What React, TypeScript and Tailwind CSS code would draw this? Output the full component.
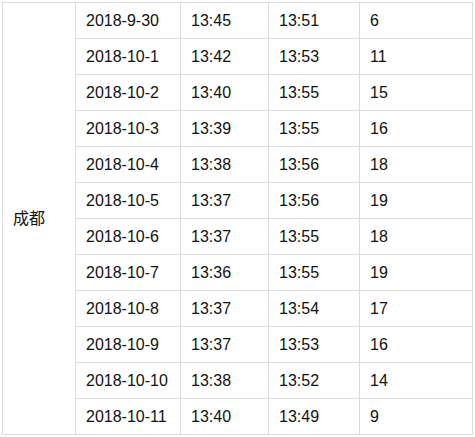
import React from "react";

const rows: [string, string, string, string][] = [
  ["2018-9-30", "13:45", "13:51", "6"],
  ["2018-10-1", "13:42", "13:53", "11"],
  ["2018-10-2", "13:40", "13:55", "15"],
  ["2018-10-3", "13:39", "13:55", "16"],
  ["2018-10-4", "13:38", "13:56", "18"],
  ["2018-10-5", "13:37", "13:56", "19"],
  ["2018-10-6", "13:37", "13:55", "18"],
  ["2018-10-7", "13:36", "13:55", "19"],
  ["2018-10-8", "13:37", "13:54", "17"],
  ["2018-10-9", "13:37", "13:53", "16"],
  ["2018-10-10", "13:38", "13:52", "14"],
  ["2018-10-11", "13:40", "13:49", "9"],
];

export default function App() {
  return (
    <div className="w-[475px] h-[437px] bg-white overflow-hidden">
      <div
        className="ml-[2px] mt-[2px] grid grid-cols-[73px_105px_88px_91px_113px] grid-rows-[repeat(12,36px)] border-l border-t border-[#dddddd] text-[16px] text-[#111111] w-max"
        style={{ fontFamily: '"Liberation Sans", Arial, "Noto Sans CJK SC", sans-serif' }}
      >
        <div className="row-span-12 flex items-center pl-[10px] border-r border-b border-[#dddddd]">
          成都
        </div>
        {rows.map((r, i) => (
          <React.Fragment key={i}>
            {r.map((c, j) => (
              <div
                key={j}
                className="flex items-center pl-[10px] border-r border-b border-[#dddddd]"
              >
                {c}
              </div>
            ))}
          </React.Fragment>
        ))}
      </div>
    </div>
  );
}
